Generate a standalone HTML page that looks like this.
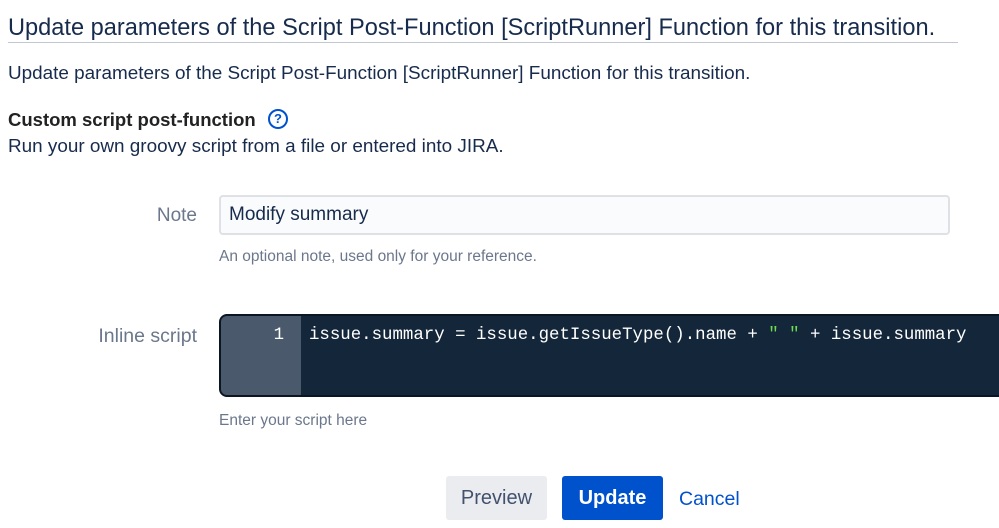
<!DOCTYPE html>
<html><head><style>
body{margin:0;width:999px;height:528px;overflow:hidden;background:#fff;font-family:"Liberation Sans",sans-serif;color:#172b4d;position:relative}
.a{position:absolute;white-space:nowrap}
</style></head><body>
<div class="a" style="left:8px;top:15px;font-size:23.6px;color:#172b4d">Update parameters of the Script Post-Function [ScriptRunner] Function for this transition.</div>
<div class="a" style="left:8px;top:42px;width:950px;height:1px;background:#c1c7d0"></div>
<div class="a" style="left:8px;top:63px;font-size:18.9px;color:#172b4d">Update parameters of the Script Post-Function [ScriptRunner] Function for this transition.</div>
<div class="a" style="left:8px;top:109px;font-size:18.5px;font-weight:bold;color:#222">Custom script post-function</div>
<div class="a" style="left:268px;top:109px;width:16px;height:16px;border:2px solid #0052cc;border-radius:50%;color:#0052cc;font-size:13px;font-weight:bold;text-align:center;line-height:16px">?</div>
<div class="a" style="left:8px;top:136px;font-size:18.9px;color:#172b4d">Run your own groovy script from a file or entered into JIRA.</div>
<div class="a" style="left:100px;top:205px;width:97px;text-align:right;font-size:19px;color:#6b778c">Note</div>
<div class="a" style="left:219px;top:195px;width:727px;height:36px;border:2px solid #dfe1e6;border-radius:4px;background:#fafbfc"></div>
<div class="a" style="left:229px;top:204px;font-size:19px;color:#172b4d">Modify summary</div>
<div class="a" style="left:219px;top:248px;font-size:15.5px;color:#6b778c">An optional note, used only for your reference.</div>
<div class="a" style="left:60px;top:325px;width:137px;text-align:right;font-size:19.5px;color:#6b778c">Inline script</div>
<div class="a" style="left:219px;top:314px;width:800px;height:79px;border:2px solid #0b1622;border-radius:8px;background:#13263a;overflow:hidden">
<div style="position:absolute;left:0;top:0;width:80px;height:100%;background:#4a5a6c"></div>
</div>
<div class="a" style="left:260px;top:326px;width:24px;text-align:right;font-family:'Liberation Mono',monospace;font-size:17.4px;color:#fff">1</div>
<div class="a" style="left:309px;top:326px;font-family:'Liberation Mono',monospace;font-size:17.4px;color:#fff">issue.summary = issue.getIssueType().name + <span style="color:#6fdc4f">" "</span> + issue.summary</div>
<div class="a" style="left:219px;top:412px;font-size:15.5px;color:#6b778c">Enter your script here</div>
<div class="a" style="left:446px;top:476px;width:101px;height:44px;background:#ebecf0;border-radius:3px;text-align:center;line-height:45px;font-size:20px;color:#42526e">Preview</div>
<div class="a" style="left:562px;top:476px;width:101px;height:44px;background:#0052cc;border-radius:3px;text-align:center;line-height:45px;font-size:20px;font-weight:bold;color:#fff">Update</div>
<div class="a" style="left:679px;top:488px;font-size:19.5px;color:#0052cc">Cancel</div>
</body></html>
